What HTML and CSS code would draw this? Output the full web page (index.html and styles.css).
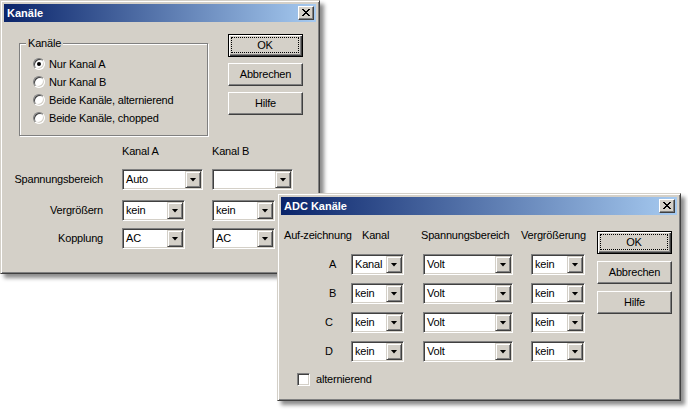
FILE: index.html
```html
<!DOCTYPE html>
<html lang="de">
<head>
<meta charset="utf-8">
<title>Kanäle</title>
<link rel="stylesheet" href="styles.css">
</head>
<body>
<div class="desktop">

  <section class="window win-kanaele">
    <header class="titlebar">
      <span class="title">Kanäle</span>
      <span class="close-btn"><svg width="8" height="7" viewBox="0 0 8 7" shape-rendering="crispEdges"><path d="M0 0h2v1H0z M6 0h2v1H6z M1 1h2v1H1z M5 1h2v1H5z M2 2h4v1H2z M3 3h2v1H3z M2 4h4v1H2z M1 5h2v1H1z M5 5h2v1H5z M0 6h2v1H0z M6 6h2v1H6z" fill="#000"/></svg></span>
    </header>
    <div class="client client-kanaele">
      <div class="top-area">
        <div class="group">
          <span class="group-label">Kanäle</span>
          <div class="radio-row"><span class="radio checked"></span><span>Nur Kanal A</span></div>
          <div class="radio-row"><span class="radio"></span><span>Nur Kanal B</span></div>
          <div class="radio-row"><span class="radio"></span><span>Beide Kanäle, alternierend</span></div>
          <div class="radio-row"><span class="radio"></span><span>Beide Kanäle, chopped</span></div>
        </div>
        <div class="btn-col btn-col-1">
          <div class="btn default"><span class="focus">OK</span></div>
          <div class="btn">Abbrechen</div>
          <div class="btn">Hilfe</div>
        </div>
      </div>
      <div class="settings">
        <span></span>
        <span class="col-head">Kanal A</span>
        <span class="col-head">Kanal B</span>

        <span class="set-label">Spannungsbereich</span>
        <div class="combo w81"><span class="combo-text">Auto</span><span class="drop"></span></div>
        <div class="combo w81"><span class="combo-text"></span><span class="drop"></span></div>

        <span class="set-label">Vergrößern</span>
        <div class="combo w63"><span class="combo-text">kein</span><span class="drop"></span></div>
        <div class="combo w63"><span class="combo-text">kein</span><span class="drop"></span></div>

        <span class="set-label">Kopplung</span>
        <div class="combo w63"><span class="combo-text">AC</span><span class="drop"></span></div>
        <div class="combo w63"><span class="combo-text">AC</span><span class="drop"></span></div>
      </div>
    </div>
  </section>

  <section class="window win-adc">
    <header class="titlebar">
      <span class="title">ADC Kanäle</span>
      <span class="close-btn"><svg width="8" height="7" viewBox="0 0 8 7" shape-rendering="crispEdges"><path d="M0 0h2v1H0z M6 0h2v1H6z M1 1h2v1H1z M5 1h2v1H5z M2 2h4v1H2z M3 3h2v1H3z M2 4h4v1H2z M1 5h2v1H1z M5 5h2v1H5z M0 6h2v1H0z M6 6h2v1H6z" fill="#000"/></svg></span>
    </header>
    <div class="client client-adc">
      <div class="adc-main">
        <div class="adc-head">
          <span class="h-rec">Auf-zeichnung</span>
          <span class="h-kanal">Kanal</span>
          <span class="h-range">Spannungsbereich</span>
          <span class="h-zoom">Vergrößerung</span>
        </div>
        <div class="adc-rows">
          <div class="adc-row">
            <span class="row-label">A</span>
            <div class="combo w53"><span class="combo-text">Kanal</span><span class="drop"></span></div>
            <div class="combo w90 gap-l"><span class="combo-text">Volt</span><span class="drop"></span></div>
            <div class="combo w54 gap-r"><span class="combo-text">kein</span><span class="drop"></span></div>
          </div>
          <div class="adc-row">
            <span class="row-label">B</span>
            <div class="combo w53"><span class="combo-text">kein</span><span class="drop"></span></div>
            <div class="combo w90 gap-l"><span class="combo-text">Volt</span><span class="drop"></span></div>
            <div class="combo w54 gap-r"><span class="combo-text">kein</span><span class="drop"></span></div>
          </div>
          <div class="adc-row">
            <span class="row-label shift">C</span>
            <div class="combo w53"><span class="combo-text">kein</span><span class="drop"></span></div>
            <div class="combo w90 gap-l"><span class="combo-text">Volt</span><span class="drop"></span></div>
            <div class="combo w54 gap-r"><span class="combo-text">kein</span><span class="drop"></span></div>
          </div>
          <div class="adc-row">
            <span class="row-label shift">D</span>
            <div class="combo w53"><span class="combo-text">kein</span><span class="drop"></span></div>
            <div class="combo w90 gap-l"><span class="combo-text">Volt</span><span class="drop"></span></div>
            <div class="combo w54 gap-r"><span class="combo-text">kein</span><span class="drop"></span></div>
          </div>
        </div>
        <div class="check-row"><span class="checkbox"></span><span>alternierend</span></div>
      </div>
      <div class="btn-col btn-col-2">
        <div class="btn default"><span class="focus">OK</span></div>
        <div class="btn">Abbrechen</div>
        <div class="btn">Hilfe</div>
      </div>
    </div>
  </section>

</div>
</body>
</html>
```

FILE: styles.css
```css
* { box-sizing: border-box; }

html, body {
  margin: 0;
  padding: 0;
  background: #fff;
}

body {
  font-family: "Liberation Sans", Arial, sans-serif;
  font-size: 11px;
  line-height: 13px;
  letter-spacing: -0.2px;
  color: #000;
}

.desktop {
  position: relative;
  width: 688px;
  height: 410px;
  overflow: hidden;
}

/* ---------- window frame ---------- */
.window {
  position: absolute;
  display: flex;
  flex-direction: column;
  background: #d4d0c8;
  border: 1px solid;
  border-color: #d4d0c8 #404040 #404040 #d4d0c8;
  box-shadow: inset 1px 1px 0 #fff, inset -1px -1px 0 #808080, 4px 4px 4px rgba(0, 0, 0, 0.45);
  padding: 3px;
}

.win-kanaele { left: 0; top: 0; width: 320px; height: 274px; }
.win-adc { left: 277px; top: 193px; width: 404px; height: 208px; }

.titlebar {
  flex: none;
  height: 18px;
  display: flex;
  align-items: center;
  justify-content: space-between;
  padding: 0 2px 0 3px;
  background: linear-gradient(to right, #0a246a, #a6caf0);
}

.title {
  color: #fff;
  font-weight: bold;
  line-height: 18px;
  letter-spacing: 0;
}

.close-btn {
  width: 16px;
  height: 14px;
  display: flex;
  align-items: center;
  justify-content: center;
  padding: 0 1px 1px 0;
  background: #d4d0c8;
  border: 1px solid;
  border-color: #fff #404040 #404040 #fff;
  box-shadow: inset -1px -1px 0 #808080;
}

.close-btn svg { display: block; }

.client { flex: 1; }

/* ---------- buttons ---------- */
.btn-col {
  display: flex;
  flex-direction: column;
}

.btn {
  width: 75px;
  height: 23px;
  display: flex;
  align-items: center;
  justify-content: center;
  background: #d4d0c8;
  border: 1px solid;
  border-color: #fff #404040 #404040 #fff;
  box-shadow: inset -1px -1px 0 #808080;
}

.btn.default {
  border-color: #000;
  box-shadow: inset 1px 1px 0 #fff, inset -1px -1px 0 #404040, inset -2px -2px 0 #808080;
  padding: 2px 3px 3px 2px;
  align-items: stretch;
}

.focus {
  flex: 1;
  display: flex;
  align-items: center;
  justify-content: center;
  border: 1px dotted #000;
}

/* ---------- combo boxes ---------- */
.combo {
  display: flex;
  height: 21px;
  padding: 1px;
  background: #fff;
  border: 1px solid;
  border-color: #808080 #fff #fff #808080;
  box-shadow: inset 1px 1px 0 #404040, inset -1px -1px 0 #d4d0c8;
}

.combo-text {
  flex: 1;
  min-width: 0;
  padding-left: 2px;
  line-height: 17px;
  white-space: nowrap;
  overflow: hidden;
}

.drop {
  flex: none;
  width: 16px;
  height: 17px;
  display: flex;
  align-items: center;
  justify-content: center;
  background: #d4d0c8;
  border: 1px solid;
  border-color: #d4d0c8 #404040 #404040 #d4d0c8;
  box-shadow: inset 1px 1px 0 #fff, inset -1px -1px 0 #808080;
}

.drop::after {
  content: "";
  width: 7px;
  height: 4px;
  background: #000;
  clip-path: polygon(0 0, 100% 0, 50% 100%);
}

.w81 { width: 81px; }
.w63 { width: 63px; }
.w53 { width: 53px; }
.w54 { width: 54px; }
.w90 { width: 90px; }

/* ---------- dialog 1: Kanäle ---------- */
.client-kanaele { padding-top: 12px; }

.top-area {
  display: flex;
  align-items: flex-start;
  padding-left: 15px;
}

.group {
  position: relative;
  width: 189px;
  height: 93px;
  margin-top: 9px;
  padding: 11px 0 0 13px;
  border: 1px solid #808080;
  box-shadow: 1px 1px 0 #fff, inset 1px 1px 0 #fff;
}

.group-label {
  position: absolute;
  top: -7px;
  left: 6px;
  padding: 0 2px;
  line-height: 13px;
  background: #d4d0c8;
}

.radio-row {
  height: 18px;
  display: flex;
  align-items: center;
  gap: 4px;
  white-space: nowrap;
}

.radio {
  position: relative;
  flex: none;
  width: 12px;
  height: 12px;
  border-radius: 50%;
  background: #fff;
  border: 1px solid;
  border-color: #808080 #fff #fff #808080;
  box-shadow: inset 1px 1px 0 #404040, inset -1px -1px 0 #d4d0c8;
}

.radio.checked::after {
  content: "";
  position: absolute;
  left: 3px;
  top: 3px;
  width: 4px;
  height: 4px;
  border-radius: 50%;
  background: #000;
}

.btn-col-1 {
  margin-left: 20px;
  gap: 6px;
}

.settings {
  display: grid;
  grid-template-columns: 118px 90px auto;
  grid-template-rows: 24px 31px 28px 21px;
  align-items: start;
  margin-top: 9px;
}

.col-head { line-height: 13px; }

.set-label {
  line-height: 21px;
  text-align: right;
  padding-right: 19px;
  white-space: nowrap;
}

/* ---------- dialog 2: ADC Kanäle ---------- */
.client-adc {
  display: flex;
  padding-left: 3px;
}

.adc-main {
  width: 313px;
  padding-top: 14px;
}

.adc-head {
  display: flex;
  height: 13px;
  white-space: nowrap;
}

.h-rec { width: 78px; }
.h-kanal { width: 59px; }
.h-range { width: 100px; }

.adc-rows {
  margin-top: 12px;
  display: flex;
  flex-direction: column;
  gap: 8px;
}

.adc-row {
  display: flex;
  height: 21px;
  align-items: center;
}

.row-label {
  width: 67px;
  padding-left: 45px;
}

.row-label.shift { padding-left: 41px; }

.gap-l { margin-left: 19px; }
.gap-r { margin-left: 18px; }

.check-row {
  margin-top: 11px;
  padding-left: 13px;
  display: flex;
  align-items: center;
  gap: 6px;
}

.checkbox {
  flex: none;
  width: 13px;
  height: 13px;
  background: #fff;
  border: 1px solid;
  border-color: #808080 #fff #fff #808080;
  box-shadow: inset 1px 1px 0 #404040, inset -1px -1px 0 #d4d0c8;
}

.btn-col-2 {
  margin-top: 16px;
  gap: 7px;
}
```
